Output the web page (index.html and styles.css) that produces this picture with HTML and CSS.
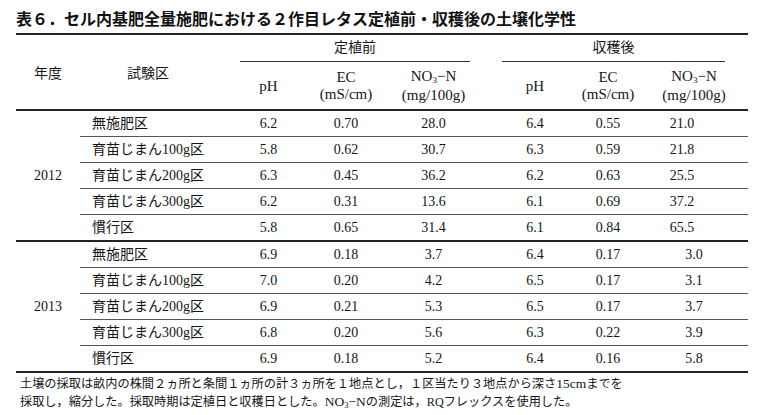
FILE: index.html
```html
<!DOCTYPE html>
<html lang="ja">
<head>
<meta charset="utf-8">
<title>表６</title>
<link rel="stylesheet" href="styles.css">
</head>
<body>
<div class="page">
  <h1 class="title">表６．セル内基肥全量施肥における２作目レタス定植前・収穫後の土壌化学性</h1>
  <table class="data">
    <colgroup>
      <col class="c-year"><col class="c-plot"><col class="c-ph1"><col class="c-ec1"><col class="c-no1"><col class="c-gap"><col class="c-ph2"><col class="c-ec2"><col class="c-no2">
    </colgroup>
    <thead>
      <tr class="h1">
        <th class="year-h" rowspan="2">年度</th>
        <th class="plot-h" rowspan="2">試験区</th>
        <th class="group" colspan="3"><div class="g-line g-before">定植前</div></th>
        <th class="gap-h" rowspan="2"></th>
        <th class="group" colspan="3"><div class="g-line g-after">収穫後</div></th>
      </tr>
      <tr class="h2">
        <th>pH</th>
        <th>EC<br>(mS/cm)</th>
        <th>NO<sub>3</sub>−N<br>(mg/100g)</th>
        <th>pH</th>
        <th>EC<br>(mS/cm)</th>
        <th>NO<sub>3</sub>−N<br>(mg/100g)</th>
      </tr>
    </thead>
    <tbody class="y2012">
      <tr><td class="year" rowspan="5">2012</td><td class="plot">無施肥区</td><td>6.2</td><td>0.70</td><td>28.0</td><td></td><td>6.4</td><td>0.55</td><td class="n2">21.0</td></tr>
      <tr><td class="plot">育苗じまん100g区</td><td>5.8</td><td>0.62</td><td>30.7</td><td></td><td>6.3</td><td>0.59</td><td class="n2">21.8</td></tr>
      <tr><td class="plot">育苗じまん200g区</td><td>6.3</td><td>0.45</td><td>36.2</td><td></td><td>6.2</td><td>0.63</td><td class="n2">25.5</td></tr>
      <tr><td class="plot">育苗じまん300g区</td><td>6.2</td><td>0.31</td><td>13.6</td><td></td><td>6.1</td><td>0.69</td><td class="n2">37.2</td></tr>
      <tr class="last"><td class="plot">慣行区</td><td>5.8</td><td>0.65</td><td>31.4</td><td></td><td>6.1</td><td>0.84</td><td class="n2">65.5</td></tr>
    </tbody>
    <tbody class="y2013">
      <tr><td class="year" rowspan="5">2013</td><td class="plot">無施肥区</td><td>6.9</td><td>0.18</td><td>3.7</td><td></td><td>6.4</td><td>0.17</td><td class="n2">3.0</td></tr>
      <tr><td class="plot">育苗じまん100g区</td><td>7.0</td><td>0.20</td><td>4.2</td><td></td><td>6.5</td><td>0.17</td><td class="n2">3.1</td></tr>
      <tr><td class="plot">育苗じまん200g区</td><td>6.9</td><td>0.21</td><td>5.3</td><td></td><td>6.5</td><td>0.17</td><td class="n2">3.7</td></tr>
      <tr><td class="plot">育苗じまん300g区</td><td>6.8</td><td>0.20</td><td>5.6</td><td></td><td>6.3</td><td>0.22</td><td class="n2">3.9</td></tr>
      <tr class="last"><td class="plot">慣行区</td><td>6.9</td><td>0.18</td><td>5.2</td><td></td><td>6.4</td><td>0.16</td><td class="n2">5.8</td></tr>
    </tbody>
  </table>
  <p class="note">土壌の採取は畝内の株間２ヵ所と条間１ヵ所の計３ヵ所を１地点とし，１区当たり３地点から深さ<span class="lat">15cm</span>までを<br>採取し，縮分した。採取時期は定植日と収穫日とした。<span class="lat">NO<sub>3</sub>−N</span>の測定は，RQフレックスを使用した。</p>
</div>
</body>
</html>
```

FILE: styles.css
```css
html, body {
  margin: 0;
  padding: 0;
  background: #ffffff;
}

body {
  color: #151515;
  font-family: "Liberation Serif", "Noto Sans CJK JP", serif;
}

.page {
  padding: 9px 12px 0 16px;
}

.title {
  margin: 0;
  font-family: "Noto Sans CJK JP", sans-serif;
  font-weight: bold;
  font-size: 16px;
  line-height: 18px;
  color: #111;
  white-space: nowrap;
}

.data {
  margin-top: 6px;
  width: 732px;
  table-layout: fixed;
  border-collapse: separate;
  border-spacing: 0;
  border-top: 2px solid #222;
  font-size: 14px;
}

.c-year { width: 64px; }
.c-plot { width: 152px; }
.c-ph1 { width: 73px; }
.c-ec1 { width: 82px; }
.c-no1 { width: 93px; }
.c-gap { width: 14px; }
.c-ph2 { width: 82px; }
.c-ec2 { width: 64px; }
.c-no2 { width: 108px; }

.data th {
  font-weight: normal;
  padding: 0;
  text-align: center;
  vertical-align: middle;
}

.data sub {
  font-size: 9px;
  vertical-align: baseline;
  position: relative;
  top: 2px;
}

.year-h, .plot-h, .gap-h {
  border-bottom: 2px solid #222;
}

.plot-h {
  padding-right: 16px !important;
}

.group .g-line {
  line-height: 26px;
  border-bottom: 1px solid #333;
}

.g-before {
  margin: 0 10px 0 8px;
}

.g-after {
  margin: 0 23px 0 8px;
}

.h2 th {
  font-size: 15px;
  line-height: 17px;
  padding: 6px 0 5px;
  border-bottom: 2px solid #222;
}

.data td {
  padding: 0;
  line-height: 25px;
  text-align: center;
  white-space: nowrap;
  border-bottom: 1px solid #555;
}

.data td.plot {
  text-align: left;
  padding-left: 12px;
}

.data td.year {
  vertical-align: middle;
  border-bottom: 2px solid #222;
}

.data tr.last td {
  border-bottom: 2px solid #222;
}

.y2012 td.n2 {
  padding-right: 24px;
}

.note {
  margin: 2px 0 0;
  padding-left: 4px;
  font-size: 12.2px;
  line-height: 18px;
  color: #151515;
  white-space: nowrap;
}

.note .lat {
  font-size: 13.5px;
}

.note sub {
  font-size: 8.5px;
  vertical-align: baseline;
  position: relative;
  top: 2px;
}
```
